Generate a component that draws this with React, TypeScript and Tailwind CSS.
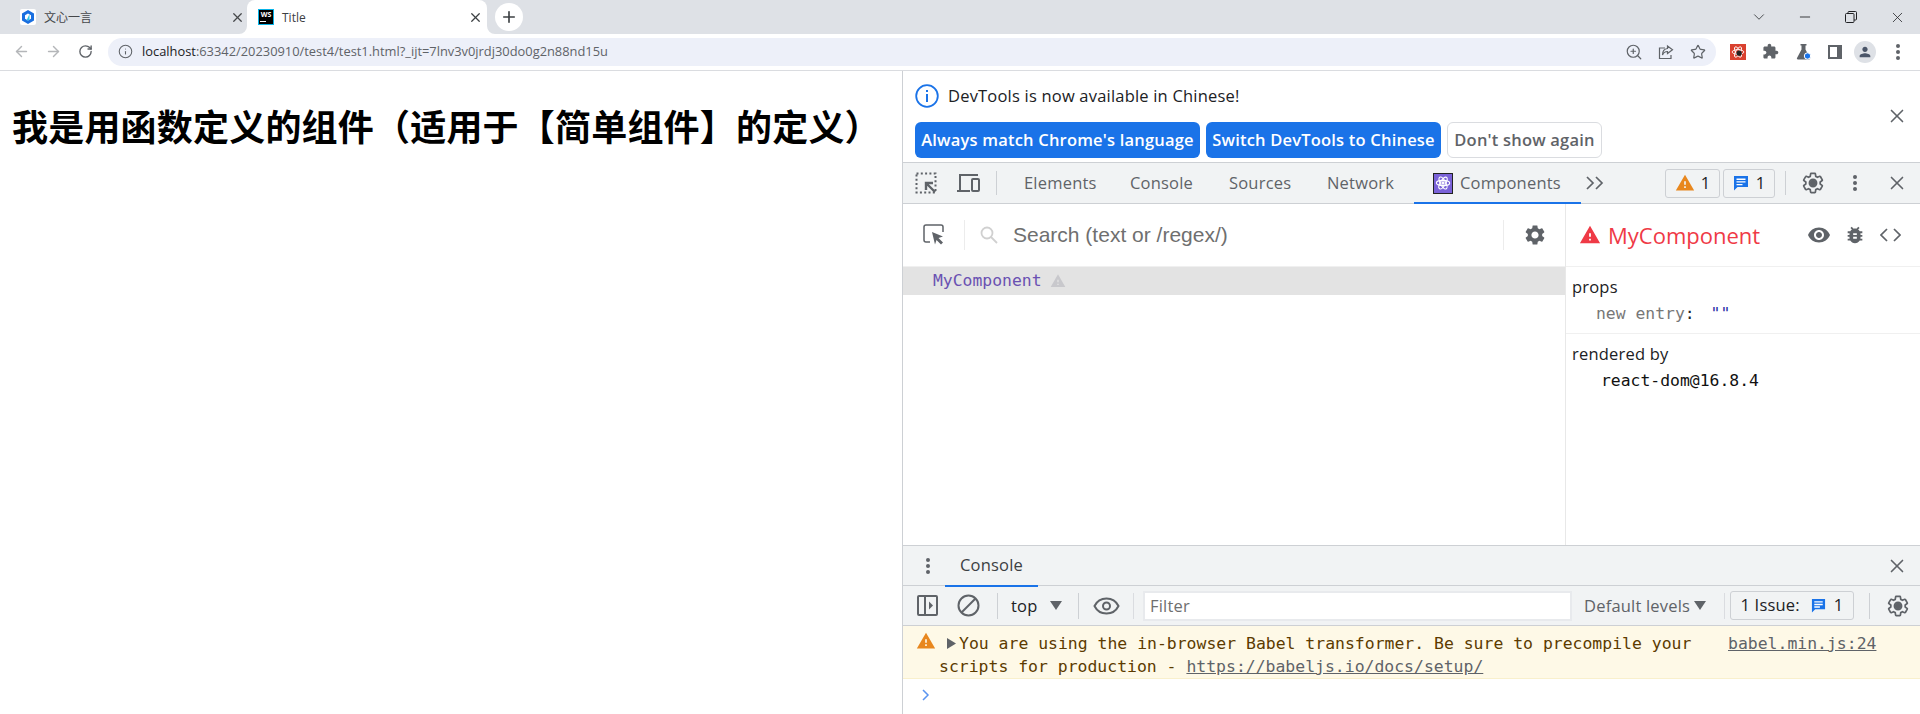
import React from "react";
import { ArrowLeft, ArrowRight, RotateCw, Info, Star, X, Plus, ZoomIn, ChevronDown, Minus } from "lucide-react";

const GEAR = "M19.14 12.94c.04-.3.06-.61.06-.94 0-.32-.02-.64-.07-.94l2.03-1.58c.18-.14.23-.41.12-.61l-1.92-3.32c-.12-.22-.37-.29-.59-.22l-2.39.96c-.5-.38-1.03-.7-1.62-.94l-.36-2.54c-.04-.24-.24-.41-.48-.41h-3.84c-.24 0-.43.17-.47.41l-.36 2.54c-.59.24-1.13.57-1.62.94l-2.39-.96c-.22-.08-.47 0-.59.22L2.74 8.87c-.12.21-.08.47.12.61l2.03 1.58c-.05.3-.09.63-.09.94s.02.64.07.94l-2.03 1.58c-.18.14-.23.41-.12.61l1.92 3.32c.12.22.37.29.59.22l2.39-.96c.5.38 1.03.7 1.62.94l.36 2.54c.05.24.24.41.48.41h3.84c.24 0 .44-.17.47-.41l.36-2.54c.59-.24 1.13-.56 1.62-.94l2.39.96c.22.08.47 0 .59-.22l1.92-3.32c.12-.22.07-.47-.12-.61l-2.01-1.58zM12 15.6c-1.98 0-3.6-1.62-3.6-3.6s1.62-3.6 3.6-3.6 3.6 1.62 3.6 3.6-1.62 3.6-3.6 3.6z";
const TRI = "M1 21h22L12 2 1 21zm12-3h-2v-2h2v2zm0-4h-2v-4h2v4z";
const MONO = "font-['DejaVu_Sans_Mono',monospace] tracking-normal";

const Solid = ({ d, size, color }: { d: string; size: number; color: string }) => (
  <svg width={size} height={size} viewBox="0 0 24 24" fill={color} className="shrink-0">
    <path d={d} />
  </svg>
);

const OutlineGear = () => (
  <svg width="24" height="24" viewBox="0 0 24 24" className="shrink-0">
    <path d={GEAR} fill="none" stroke="#5f6368" strokeWidth="1.7" />
    <circle cx="12" cy="12" r="3.2" fill="#5f6368" />
  </svg>
);

const Dots = ({ color = "#5f6368" }: { color?: string }) => (
  <svg width="6" height="18" viewBox="0 0 6 18" fill={color} className="shrink-0">
    <circle cx="3" cy="3" r="2" />
    <circle cx="3" cy="9" r="2" />
    <circle cx="3" cy="15" r="2" />
  </svg>
);

const CloseX = () => <X size={22} strokeWidth={1.8} color="#5f6368" className="shrink-0" />;

const Chat = ({ size }: { size: number }) => (
  <svg width={size} height={size} viewBox="0 0 16 16" className="shrink-0">
    <path d="M1 1h14v11H4.5L1 15.5z" fill="#1a73e8" />
    <path d="M3.5 3.5h9v1.4h-9zM3.5 6.2h9v1.4h-9zM3.5 8.9h6v1.4h-6z" fill="#fff" />
  </svg>
);

const Sep = ({ h = "h-[26px]", color = "bg-[#cdd0d4]" }: { h?: string; color?: string }) => (
  <div className={`w-px shrink-0 ${h} ${color}`} />
);

const Atom = () => (
  <div className="w-[20px] h-[21px] bg-[#7a62d8] border border-[#222] flex items-center justify-center shrink-0">
    <svg width="16" height="16" viewBox="0 0 24 24" fill="none" stroke="#fff" strokeWidth="1.7">
      <ellipse cx="12" cy="12" rx="10" ry="4" />
      <ellipse cx="12" cy="12" rx="10" ry="4" transform="rotate(60 12 12)" />
      <ellipse cx="12" cy="12" rx="10" ry="4" transform="rotate(120 12 12)" />
      <circle cx="12" cy="12" r="1.6" fill="#fff" />
    </svg>
  </div>
);

const TabStrip = () => (
  <div className="h-[34px] bg-[#dee1e6] flex items-end shrink-0 tracking-normal">
    <div className="w-[247px] h-[34px] flex items-center pl-[20px] shrink-0">
      <svg width="16" height="16" viewBox="0 0 16 16" className="shrink-0">
        <rect width="16" height="16" rx="2" fill="#fff" />
        <path d="M8 1l6 3.5v7L8 15l-6-3.5v-7z" fill="#1a6fe0" />
        <path d="M8 4.5l3 1.8v3.4L8 11.5 5 9.7V6.3z" fill="#fff" />
        <path d="M9.5 5v6l-3 .5z" fill="#30c6e8" />
      </svg>
      <span className="ml-[8px] mt-[2px] w-[186px] text-[12px] text-[#45474a]">文心一言</span>
      <X size={15} strokeWidth={2} color="#45474a" className="shrink-0" />
    </div>
    <div className="relative w-[240px] h-[34px] bg-white rounded-t-[8px] flex items-center pl-[11px] shrink-0">
      <svg width="8" height="8" viewBox="0 0 8 8" fill="#fff" className="absolute bottom-0 -left-[8px]"><path d="M8 0v8H0a8 8 0 0 0 8-8z" /></svg>
      <svg width="8" height="8" viewBox="0 0 8 8" fill="#fff" className="absolute bottom-0 -right-[8px]"><path d="M0 0v8h8a8 8 0 0 1-8-8z" /></svg>
      <div className="w-[16px] h-[16px] bg-black border border-[#08b4e8] flex flex-col items-center shrink-0">
        <span className="text-[7px] leading-[9px] font-bold text-white">WS</span>
        <div className="w-[6px] h-px bg-white mt-[2px] self-start ml-[1px]" />
      </div>
      <span className="ml-[8px] mt-[2px] w-[186px] text-[12px] text-[#3c4043]">Title</span>
      <X size={15} strokeWidth={2} color="#3c4043" className="shrink-0" />
    </div>
    <div className="w-[28px] h-[28px] rounded-full bg-white flex items-center justify-center ml-[8px] mb-[3px] shrink-0">
      <Plus size={18} strokeWidth={2.2} color="#3c4043" />
    </div>
    <div className="flex-1" />
    <div className="h-[28px] flex items-center mb-[3px]">
      <div className="w-[46px] flex justify-center"><ChevronDown size={18} strokeWidth={1.2} color="#3c4043" /></div>
      <div className="w-[46px] flex justify-center"><Minus size={16} strokeWidth={1.3} color="#202124" /></div>
      <div className="w-[46px] flex justify-center">
        <svg width="12" height="12" viewBox="0 0 12 12" fill="none" stroke="#202124" strokeWidth="1">
          <rect x="0.5" y="2.5" width="8.5" height="9" rx="1" />
          <path d="M3 2.5V1.5a1 1 0 0 1 1-1h6.5a1 1 0 0 1 1 1V8a1 1 0 0 1-1 1H9" />
        </svg>
      </div>
      <div className="w-[46px] flex justify-center"><X size={17} strokeWidth={1.1} color="#202124" /></div>
    </div>
  </div>
);

const Toolbar = () => (
  <div className="h-[37px] bg-white border-b border-[#dadce0] flex items-center pl-[5px] pb-px shrink-0 tracking-normal">
    <div className="w-[32px] flex justify-center"><ArrowLeft size={17} strokeWidth={2} color="#b4b6b9" /></div>
    <div className="w-[32px] flex justify-center"><ArrowRight size={17} strokeWidth={2} color="#b4b6b9" /></div>
    <div className="w-[33px] flex justify-center"><RotateCw size={15} strokeWidth={2.2} color="#5f6368" /></div>
    <div className="ml-[6px] w-[1608px] h-[28px] rounded-full bg-[#edf0f9] flex items-center pl-[10px] pr-[2px] shrink-0">
      <Info size={15} strokeWidth={1.7} color="#5f6368" className="shrink-0" />
      <span className="ml-[9px] text-[12.87px] font-['Open_Sans',sans-serif] text-[#5f6368] whitespace-nowrap">
        <span className="text-[#202124]">localhost</span>:63342/20230910/test4/test1.html?_ijt=7lnv3v0jrdj30do0g2n88nd15u
      </span>
      <div className="flex-1" />
      <div className="w-[32px] flex justify-center"><ZoomIn size={18} strokeWidth={1.6} color="#5f6368" /></div>
      <div className="w-[32px] flex justify-center">
        <svg width="16" height="16" viewBox="0 0 16 16" fill="none" stroke="#5f6368" strokeWidth="1.2">
          <path d="M7 4H1.5v10.5H13V11" />
          <path d="M9.5 2l5 3.8-5 3.8V7.5C7 7.5 5.5 8.5 4.5 11c0-4 2-6.200 5-6.500z" />
        </svg>
      </div>
      <div className="w-[32px] flex justify-center"><Star size={16} strokeWidth={1.8} color="#5f6368" /></div>
    </div>
    <div className="w-[38px] flex justify-end pr-[8px]">
      <div className="w-[16px] h-[16px] bg-[#d9412f] flex items-center justify-center">
        <svg width="14" height="14" viewBox="0 0 24 24" fill="none" stroke="#fff" strokeWidth="1.5">
          <ellipse cx="12" cy="12" rx="10" ry="4" />
          <ellipse cx="12" cy="12" rx="10" ry="4" transform="rotate(60 12 12)" />
          <ellipse cx="12" cy="12" rx="10" ry="4" transform="rotate(120 12 12)" />
          <circle cx="14" cy="14" r="4.500" fill="#222" stroke="none" />
        </svg>
      </div>
    </div>
    <div className="w-[32px] flex justify-center">
      <Solid size={17} color="#5f6368" d="M20.5 11H19V7c0-1.100-.9-2-2-2h-4V3.500C13 2.120 11.880 1 10.500 1S8 2.120 8 3.500V5H4c-1.100 0-1.990.9-1.990 2v3.800H3.500c1.490 0 2.700 1.210 2.700 2.700s-1.210 2.700-2.700 2.700H2V20c0 1.100.9 2 2 2h3.800v-1.500c0-1.490 1.210-2.700 2.700-2.700 1.490 0 2.700 1.210 2.700 2.700V22H17c1.100 0 2-.9 2-2v-4h1.500c1.380 0 2.500-1.120 2.500-2.500S21.880 11 20.500 11z" />
    </div>
    <div className="w-[35px] flex justify-center">
      <svg width="17" height="17" viewBox="0 0 17 17" fill="#5f6368">
        <path d="M5.500 1h6v1.500h-1v4l4.500 8.500a1 1 0 0 1-1 1.500H3a1 1 0 0 1-1-1.500l4.500-8.500v-4h-1z" />
        <circle cx="12.500" cy="13" r="3.200" fill="#1a73e8" stroke="#fff" />
      </svg>
    </div>
    <div className="w-[28px] flex justify-center">
      <div className="w-[14px] h-[14px] border-[2px] border-[#5f6368] bg-[#5f6368] flex">
        <div className="w-[7px] bg-white" />
      </div>
    </div>
    <div className="w-[31px] flex justify-center">
      <div className="w-[22px] h-[22px] rounded-full bg-[#dee1e6] flex items-center justify-center">
        <Solid size={16} color="#4a5568" d="M12 12c2.210 0 4-1.790 4-4s-1.790-4-4-4-4 1.790-4 4 1.790 4 4 4zm0 2c-2.670 0-8 1.340-8 4v2h16v-2c0-2.660-5.330-4-8-4z" />
      </div>
    </div>
    <div className="w-[35px] flex justify-center"><Dots /></div>
  </div>
);

const InfoBar = () => (
  <div className="h-[92px] bg-white border-b border-[#cdd0d4] pl-[12px] pr-[12px] pt-[12px] shrink-0 relative">
    <div className="flex items-center h-[26px]">
      <svg width="24" height="24" viewBox="0 0 24 24" fill="none" className="shrink-0">
        <circle cx="12" cy="12" r="10.800" stroke="#1a73e8" strokeWidth="1.800" />
        <rect x="11" y="10" width="2" height="8" fill="#1a73e8" />
        <rect x="11" y="6" width="2" height="2" fill="#1a73e8" />
      </svg>
      <span className="ml-[9px] text-[16.5px] text-[#202124] whitespace-nowrap">DevTools is now available in Chinese!</span>
      <div className="flex-1" />
      <div className="mt-[39px]"><CloseX /></div>
    </div>
    <div className="flex gap-[6px] mt-[13px] text-[16.5px] font-semibold">
      <div className="w-[285px] h-[36px] rounded-[6px] bg-[#1a73e8] text-white flex items-center justify-center whitespace-nowrap">Always match Chrome's language</div>
      <div className="w-[235px] h-[36px] rounded-[6px] bg-[#1a73e8] text-white flex items-center justify-center whitespace-nowrap">Switch DevTools to Chinese</div>
      <div className="w-[155px] h-[36px] rounded-[6px] bg-white border border-[#dadce0] text-[#5f6368] flex items-center justify-center whitespace-nowrap">Don't show again</div>
    </div>
  </div>
);

const MainTabs = () => (
  <div className="h-[41px] bg-[#f1f3f4] border-b border-[#cdd0d4] flex items-center text-[16.5px] text-[#5f6368] pl-[12px] shrink-0">
    <svg width="22" height="22" viewBox="0 0 22 22" fill="none" stroke="#5f6368" className="shrink-0">
      <rect x="1.500" y="1.500" width="19" height="19" strokeWidth="2" strokeDasharray="2 2.300" />
      <path d="M20 20l-8-8M11 18v-7h7" strokeWidth="2.400" />
    </svg>
    <svg width="24" height="22" viewBox="0 0 24 22" fill="none" stroke="#5f6368" strokeWidth="2" className="ml-[20px] shrink-0">
      <path d="M3 19V3h18M0 19h13" />
      <rect x="15" y="7" width="7" height="12" rx="1" />
    </svg>
    <div className="ml-[15px] mr-[27px]"><Sep h="h-[24px]" /></div>
    <span className="w-[106px]">Elements</span>
    <span className="w-[99px]">Console</span>
    <span className="w-[98px]">Sources</span>
    <span className="w-[87px]">Network</span>
    <div className="relative w-[167px] h-[40px] flex items-center pl-[19px] shrink-0">
      <Atom />
      <span className="ml-[7px]">Components</span>
      <div className="absolute left-0 right-0 bottom-[-1px] h-[2px] bg-[#1a73e8]" />
    </div>
    <svg width="18" height="14" viewBox="0 0 18 14" fill="none" stroke="#5f6368" strokeWidth="1.700" className="ml-[5px] shrink-0">
      <path d="M1 1l6 6-6 6M10 1l6 6-6 6" />
    </svg>
    <div className="flex-1" />
    <div className="w-[55px] h-[29px] border border-[#cdd0d4] rounded-[3px] flex items-center justify-center gap-[6px] text-[#202124] shrink-0">
      <Solid size={20} color="#e8871e" d={TRI} />1
    </div>
    <div className="ml-[3px] w-[52px] h-[29px] border border-[#cdd0d4] rounded-[3px] flex items-center justify-center gap-[7px] text-[#202124] shrink-0">
      <Chat size={16} />1
    </div>
    <div className="ml-[10px] mr-[15px]"><Sep h="h-[24px]" /></div>
    <OutlineGear />
    <div className="ml-[27px] mr-[28px]"><Dots /></div>
    <div className="mr-[12px]"><CloseX /></div>
  </div>
);

const ComponentsPane = () => (
  <div className="flex-1 flex min-h-0">
    <div className="w-[663px] border-r border-[#e8e8e8] flex flex-col shrink-0">
      <div className="h-[63px] border-b border-[#f0f0f0] flex items-center pl-[20px] shrink-0">
        <svg width="22" height="22" viewBox="0 0 22 22" fill="none" className="shrink-0">
          <path d="M20 8V3a2 2 0 0 0-2-2H3a2 2 0 0 0-2 2v13a2 2 0 0 0 2 2h4" stroke="#5f6368" strokeWidth="1.500" />
          <path d="M9 8l11 4.500-4.500 1.500 4.500 4.500-2 2-4.500-4.500-1.500 4.500z" fill="#5f6368" />
        </svg>
        <div className="ml-[19px] mr-[15px]"><Sep h="h-[30px]" color="bg-[#ececec]" /></div>
        <svg width="18" height="18" viewBox="0 0 18 18" fill="none" stroke="#d0d0d0" strokeWidth="1.800" className="shrink-0">
          <circle cx="7" cy="7" r="5.500" />
          <path d="M11 11l6 6" />
        </svg>
        <span className="ml-[15px] w-[490px] text-[21px] tracking-normal text-[#6f6f6f] font-['Liberation_Sans',sans-serif]">Search (text or /regex/)</span>
        <Sep h="h-[30px]" color="bg-[#ececec]" />
        <div className="ml-[19px]"><Solid d={GEAR} size={24} color="#5f6368" /></div>
      </div>
      <div className="h-[28px] bg-[#e3e3e3] flex items-center pl-[30px] shrink-0">
        <span className={`${MONO} text-[16.4px] text-[#6a51b2]`}>MyComponent</span>
        <div className="ml-[8px]"><Solid d={TRI} size={16} color="#c8c8cc" /></div>
      </div>
    </div>
    <div className="flex-1 flex flex-col text-[16.5px] text-[#202124]">
      <div className="h-[63px] border-b border-[#f0f0f0] flex items-center pl-[13px] shrink-0">
        <Solid d={TRI} size={22} color="#ef3a46" />
        <span className="ml-[7px] w-[199px] text-[22px] tracking-normal text-[#ef3a46] whitespace-nowrap">MyComponent</span>
        <Solid d="M12 4.500C7 4.500 2.730 7.610 1 12c1.730 4.390 6 7.500 11 7.500s9.270-3.110 11-7.500c-1.730-4.390-6-7.500-11-7.500zM12 17c-2.760 0-5-2.240-5-5s2.240-5 5-5 5 2.240 5 5-2.240 5-5 5zm0-8c-1.660 0-3 1.340-3 3s1.340 3 3 3 3-1.340 3-3-1.340-3-3-3z" size={24} color="#5f6368" />
        <div className="ml-[13px]">
          <Solid d="M20 8h-2.810c-.45-.78-1.070-1.450-1.820-1.960L17 4.410 15.590 3l-2.170 2.170C12.960 5.060 12.490 5 12 5c-.49 0-.96.06-1.410.17L8.410 3 7 4.410l1.620 1.630C7.880 6.550 7.260 7.220 6.810 8H4v2h2.090c-.05.33-.09.66-.09 1v1H4v2h2v1c0 .34.04.67.09 1H4v2h2.810c1.040 1.790 2.970 3 5.190 3s4.150-1.210 5.190-3H20v-2h-2.090c.05-.33.09-.66.09-1v-1h2v-2h-2v-1c0-.34-.04-.67-.09-1H20V8zm-6 8h-4v-2h4v2zm0-4h-4v-2h4v2z" size={22} color="#5f6368" />
        </div>
        <svg width="21" height="14" viewBox="0 0 21 14" fill="none" stroke="#5f6368" strokeWidth="1.700" className="ml-[14px] shrink-0">
          <path d="M7 1L1 7l6 6M14 1l6 6-6 6" />
        </svg>
      </div>
      <div className="h-[67px] border-b border-[#f0f0f0] pl-[6px] pt-[7px] shrink-0">
        <div className="leading-[26px]">props</div>
        <div className={`${MONO} text-[16.4px] leading-[28px] pl-[24px] whitespace-pre`}>
          <span className="text-[#777]">new entry</span>
          <span className="text-[#202124]">: </span>
          <span className="ml-[6px] text-[#2a2aa8]">""</span>
        </div>
      </div>
      <div className="pl-[6px] pt-[7px]">
        <div className="leading-[26px]">rendered by</div>
        <div className={`${MONO} text-[16.4px] leading-[28px] pl-[29px] text-[#111]`}>react-dom@16.8.4</div>
      </div>
    </div>
  </div>
);

const Drawer = () => (
  <div className="shrink-0">
    <div className="h-[41px] bg-[#f1f3f4] border-y border-[#cdd0d4] flex items-center text-[16.5px] text-[#5f6368] pl-[22px] pr-[12px]">
      <Dots />
      <div className="relative ml-[14px] w-[93px] h-[40px] flex items-center justify-center text-[#3c4043]">
        Console
        <div className="absolute left-0 right-0 bottom-[-1px] h-[2px] bg-[#1a73e8]" />
      </div>
      <div className="flex-1" />
      <CloseX />
    </div>
    <div className="h-[40px] bg-[#f1f3f4] border-b border-[#cdd0d4] flex items-center text-[16.5px] text-[#5f6368] pl-[14px]">
      <svg width="21" height="21" viewBox="0 0 21 21" fill="none" stroke="#5f6368" strokeWidth="2" className="shrink-0">
        <rect x="1" y="1" width="19" height="19" rx="1" />
        <path d="M8 1v19" />
        <path d="M12 6.500l4 4-4 4z" fill="#5f6368" stroke="none" />
      </svg>
      <svg width="23" height="23" viewBox="0 0 23 23" fill="none" stroke="#5f6368" strokeWidth="2" className="ml-[19px] shrink-0">
        <circle cx="11.500" cy="11.500" r="10" />
        <path d="M4.500 18.500l14-14" />
      </svg>
      <div className="ml-[17px] mr-[13px]"><Sep /></div>
      <span className="w-[39px] mt-[1px] text-[#202124]">top</span>
      <svg width="12" height="9" viewBox="0 0 12 9" fill="#5f6368" className="shrink-0"><path d="M0 0h12L6 9z" /></svg>
      <div className="ml-[16px] mr-[14px]"><Sep /></div>
      <svg width="27" height="18" viewBox="0 0 27 18" fill="none" stroke="#5f6368" strokeWidth="2" className="shrink-0">
        <path d="M1.500 9C4 4 8 1.500 13.500 1.500S23 4 25.500 9C23 14 19 16.500 13.500 16.500S4 14 1.500 9z" />
        <circle cx="13.500" cy="9" r="3.500" />
      </svg>
      <div className="ml-[13px] mr-[9px]"><Sep color="bg-[#dadce0]" /></div>
      <div className="w-[429px] h-[30px] bg-white border-2 border-[#e8eaed] flex items-center pl-[5px] pt-[2px] shrink-0 text-[#6f6f6f]">Filter</div>
      <span className="ml-[12px] mt-[1px] w-[110px] whitespace-nowrap">Default levels</span>
      <svg width="12" height="9" viewBox="0 0 12 9" fill="#5f6368" className="shrink-0"><path d="M0 0h12L6 9z" /></svg>
      <div className="ml-[18px] mr-[5px]"><Sep color="bg-[#dadce0]" /></div>
      <div className="w-[124px] h-[29px] border border-[#cdd0d4] rounded-[3px] flex items-center justify-center text-[#202124] shrink-0">
        1 Issue:
        <div className="ml-[11px] mr-[8px]"><Chat size={15} /></div>
        1
      </div>
      <div className="ml-[15px] mr-[16px]"><Sep /></div>
      <OutlineGear />
    </div>
    <div className={`${MONO} h-[53px] bg-[#fef9e7] border-b border-[#f9f0cc] text-[#5c3b00] text-[16.45px] leading-[22px] relative pl-[13px] pt-[7px] whitespace-pre flex`}>
      <div className="w-[44px] shrink-0 flex items-start gap-[11px] -mt-[2px]">
        <Solid d={TRI} size={20} color="#e8871e" />
        <svg width="10" height="11" viewBox="0 0 10 11" fill="#5f6368" className="mt-[7px] shrink-0"><path d="M0 0l9 5.500L0 11z" /></svg>
      </div>
      <div className="w-[769px] shrink-0 -ml-[1px]">
        You are using the in-browser Babel transformer. Be sure to precompile your
        <div className="-ml-[20px] mt-[1px]">
          scripts for production - <span className="underline text-[#5f6368]">https://babeljs.io/docs/setup/</span>
        </div>
      </div>
      <span className="underline text-[#5f6368]">babel.min.js:24</span>
    </div>
    <div className="h-[35px] bg-white flex items-center pl-[19px] pb-[4px]">
      <svg width="8" height="12" viewBox="0 0 8 12" fill="none" stroke="#5a94f0" strokeWidth="1.500"><path d="M1 1l5 5-5 5" /></svg>
    </div>
  </div>
);

export default function App() {
  return (
    <div className="w-[1920px] h-[714px] flex flex-col overflow-hidden bg-white tracking-[0.2px] font-['Open_Sans','Noto_Sans_CJK_SC',sans-serif]">
      <TabStrip />
      <Toolbar />
      <div className="flex-1 flex min-h-0">
        <div className="w-[902px] pl-[12px] pt-[32px] shrink-0">
          <h1 className="text-[36px] leading-[44px] font-bold tracking-[0.2px] text-black whitespace-nowrap font-['Noto_Sans_CJK_SC',sans-serif]">我是用函数定义的组件（适用于【简单组件】的定义）</h1>
        </div>
        <div className="flex-1 border-l border-[#cdd0d4] flex flex-col min-w-0">
          <InfoBar />
          <MainTabs />
          <ComponentsPane />
          <Drawer />
        </div>
      </div>
    </div>
  );
}
